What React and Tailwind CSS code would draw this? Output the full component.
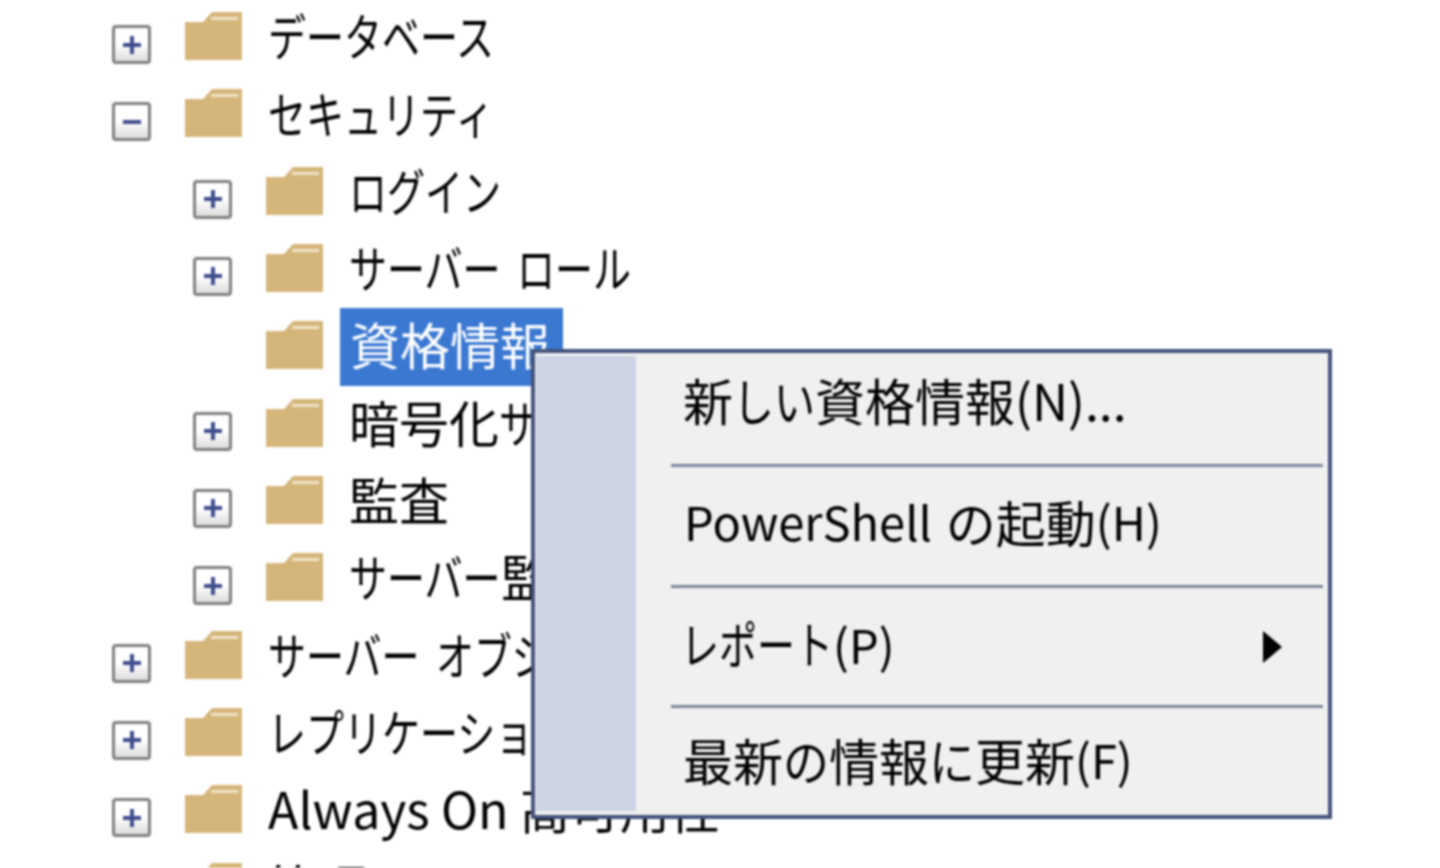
import React from "react";

// kana in the reference is a narrow UI face, so squeeze runs down to the pitch it has
const Kana = ({ children, pitch = 38 }) => (
  <span className="inline-block whitespace-nowrap" style={{ width: [...children].length * pitch }}>
    <span className="inline-block origin-left" style={{ transform: `scaleX(${pitch / 50})` }}>
      {children}
    </span>
  </span>
);

const Gap = () => <span className="inline-block w-[16px]" />;

const treeRows = [
  { level: 0, box: "plus", label: <Kana>データベース</Kana> },
  { level: 0, box: "minus", label: <Kana>セキュリティ</Kana> },
  { level: 1, box: "plus", label: <Kana>ログイン</Kana> },
  { level: 1, box: "plus", label: <><Kana>サーバー</Kana><Gap /><Kana>ロール</Kana></> },
  { level: 1, box: null, label: "資格情報", selected: true },
  { level: 1, box: "plus", label: <>暗号化<Kana>サービス</Kana><Gap /><Kana>プロバイダー</Kana></> },
  { level: 1, box: "plus", label: "監査" },
  { level: 1, box: "plus", label: <><Kana>サーバー</Kana>監査の仕様</> },
  { level: 0, box: "plus", label: <><Kana>サーバー</Kana><Gap /><Kana>オブジェクト</Kana></> },
  { level: 0, box: "plus", label: <Kana>レプリケーション</Kana> },
  { level: 0, box: "plus", label: "Always On 高可用性" },
  { level: 0, box: "plus", label: "管理" },
];

const ExpandBox = ({ type }) => (
  <div className="w-[39px] h-[39px] shrink-0 mt-[26px] rounded-[4px] border-[3px] border-[#808080] bg-gradient-to-b from-white from-50% to-[#dcdcdc] flex items-center justify-center">
    <svg width="24" height="24" viewBox="0 0 24 24">
      <rect x="3" y="10" width="18" height="4" fill="#3f4d8c" />
      {type === "plus" && <rect x="10" y="3" width="4" height="18" fill="#3f4d8c" />}
    </svg>
  </div>
);

const Folder = () => (
  <svg className="shrink-0" width="57" height="48" viewBox="0 0 57 48">
    <path d="M0 10 L18 10 L27 0 L57 0 L57 48 L0 48 Z" fill="#d4b67b" />
    <rect x="26" y="5" width="27" height="3" fill="#efe3c8" />
  </svg>
);

const TreeRow = ({ level, box, label, selected }) => (
  <div className={`h-[77.33px] flex items-center shrink-0 ${level === 1 ? "pl-[193px]" : "pl-[112px]"}`}>
    <div className="w-[39px] h-full shrink-0 flex items-start">{box && <ExpandBox type={box} />}</div>
    <div className="ml-[34px] h-full flex items-start pt-[13px]">
      <Folder />
    </div>
    {selected ? (
      <div className="ml-[17px] h-full px-[10px] pb-[6px] bg-[#3a78d2] text-white flex items-center w-[223px] overflow-hidden whitespace-nowrap">
        {label}
      </div>
    ) : (
      <div className="ml-[26px] pb-[6px] text-black whitespace-nowrap">{label}</div>
    )}
  </div>
);

const Separator = () => <div className="h-[3px] ml-[35px] mr-[3px] bg-[#7d869b] shrink-0" />;

const ContextMenu = () => (
  <div className="absolute left-[531px] top-[349px] w-[801px] h-[470px] border-[4px] border-[#45537a] bg-[#f0f0f0] pt-[3px] pb-[4px] pl-[1px] pr-[2px] flex text-black">
    <div className="w-[100px] shrink-0 bg-[#cdd4e4]" />
    <div className="flex-1 flex flex-col">
      <div className="h-[108px] pb-[22px] pl-[47px] flex items-center shrink-0 whitespace-nowrap">
        新<Kana pitch={41}>しい</Kana>資格情報(N)...
      </div>
      <Separator />
      <div className="h-[118px] pb-[10px] pl-[48px] flex items-center shrink-0 whitespace-nowrap">
        <span className="text-[47px]">PowerShell</span>
        <span className="inline-block w-[14px]" />
        の起動<span className="text-[47px]">(H)</span>
      </div>
      <Separator />
      <div className="h-[117px] pl-[45px] pr-[44px] flex items-center justify-between shrink-0 whitespace-nowrap">
        <span className="-mt-[8px]">
          <Kana>レポート</Kana>
          <span className="text-[47px]">(P)</span>
        </span>
        <svg width="19" height="32" viewBox="0 0 19 32">
          <polygon points="0,0 19,16 0,32" fill="#000" />
        </svg>
      </div>
      <Separator />
      <div className="flex-1 pl-[47px] flex items-center whitespace-nowrap">
        最新<Kana pitch={46}>の</Kana>情報<Kana pitch={46}>に</Kana>更新<span className="text-[47px]">(F)</span>
      </div>
    </div>
  </div>
);

export default function App() {
  return (
    <div
      className="relative w-[1440px] h-[868px] overflow-hidden bg-white text-[50px] blur-[0.8px]"
      style={{ fontFamily: '"Noto Sans CJK JP", "Open Sans", sans-serif' }}
    >
      <div className="flex flex-col -mt-[1px]">
        {treeRows.map((row, index) => (
          <TreeRow key={index} {...row} />
        ))}
      </div>
      <ContextMenu />
    </div>
  );
}
